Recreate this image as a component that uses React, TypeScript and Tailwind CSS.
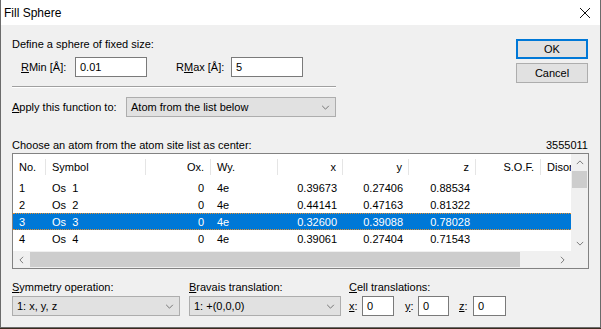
import React from 'react'

const font = { fontFamily: '"Liberation Sans", Arial, sans-serif' }

const rows = [
  { no: '1', sym: 'Os  1', ox: '0', wy: '4e', x: '0.39673', y: '0.27406', z: '0.88534' },
  { no: '2', sym: 'Os  2', ox: '0', wy: '4e', x: '0.44141', y: '0.47163', z: '0.81322' },
  { no: '3', sym: 'Os  3', ox: '0', wy: '4e', x: '0.32600', y: '0.39088', z: '0.78028' },
  { no: '4', sym: 'Os  4', ox: '0', wy: '4e', x: '0.39061', y: '0.27404', z: '0.71543' },
]

const Chevron = ({ dir = 'down', className = '' }: { dir?: 'down' | 'up' | 'left' | 'right'; className?: string }) => {
  const d = {
    down: 'M1 1 L5 5 L9 1',
    up: 'M1 5 L5 1 L9 5',
    left: 'M5 1 L1 5 L5 9',
    right: 'M1 1 L5 5 L1 9',
  }[dir]
  const vb = dir === 'down' || dir === 'up' ? '0 0 10 6' : '0 0 6 10'
  return (
    <svg viewBox={vb} className={className} fill="none" stroke="currentColor">
      <path d={d} />
    </svg>
  )
}

const Select = ({ value, className }: { value: string; className: string }) => (
  <div className={`flex h-[20px] items-center justify-between border border-[#adadad] bg-[#e1e1e1] pl-[4px] pr-[5px] ${className}`}>
    <span>{value}</span>
    <Chevron className="h-[5px] w-[9px] text-[#606060]" />
  </div>
)

const Input = ({ value, className }: { value: string; className: string }) => (
  <div className={`flex h-[20px] items-center border border-[#7a7a7a] bg-white pl-[4px] ${className}`}>{value}</div>
)

export default function App() {
  return (
    <div className="h-[329px] w-[601px] bg-[#3a2a1e]" style={font}>
      <div className="flex h-[328px] w-[601px] flex-col border-x border-b border-[#6b6b6b] bg-[#f0f0f0] text-[11px] leading-[16px] text-black">
        {/* Title bar */}
        <div className="flex h-[25px] shrink-0 items-center justify-between bg-white pl-[3px] pr-[10px] text-[12px]">
          <span>Fill Sphere</span>
          <svg viewBox="0 0 10 10" className="h-[10px] w-[10px]" stroke="#111" strokeWidth="1">
            <path d="M0 0 L10 10 M10 0 L0 10" />
          </svg>
        </div>

        <div className="flex flex-col px-[11px]">
          {/* Top area */}
          <div className="flex justify-between">
            <div className="flex w-[324px] flex-col">
              <div className="mt-[11px]">Define a sphere of fixed size:</div>
              <div className="mt-[5px] flex items-center">
                <span className="ml-[9px] w-[54px]">
                  <u>R</u>Min [Å]:
                </span>
                <Input value="0.01" className="w-[72px]" />
                <span className="ml-[29px] w-[55px]">
                  R<u>M</u>ax [Å]:
                </span>
                <Input value="5" className="w-[72px]" />
              </div>
              <div className="mt-[9px] border-t border-b border-t-[#a0a0a0] border-b-white" />
              <div className="mt-[9px] flex items-center">
                <span className="w-[114px] whitespace-nowrap">
                  <u>A</u>pply this function to:
                </span>
                <Select value="Atom from the list below" className="w-[210px]" />
              </div>
            </div>
            <div className="mt-[14px] mr-[1px] flex flex-col gap-[4px]">
              <button className="flex h-[20px] w-[72px] items-center justify-center border-2 border-[#0078d7] bg-[#e1e1e1]">OK</button>
              <button className="flex h-[20px] w-[72px] items-center justify-center border border-[#adadad] bg-[#e1e1e1]">Cancel</button>
            </div>
          </div>

          {/* List */}
          <div className="mt-[20px] flex justify-between pr-[1px]">
            <span>Choose an atom from the atom site list as center:</span>
            <span>3555011</span>
          </div>
          <div className="flex h-[116px] w-[577px] border border-[#828282] bg-white">
            <div className="flex w-[558px] flex-col">
              <div className="flex h-[98px] flex-col overflow-hidden">
                <div className="flex h-[25px] shrink-0 items-center whitespace-nowrap">
                  <div className="w-[33px] border-r border-[#e5e5e5] pl-[6px]">No.</div>
                  <div className="w-[100px] border-r border-[#e5e5e5] pl-[6px]">Symbol</div>
                  <div className="w-[65px] border-r border-[#e5e5e5] pr-[6px] text-right">Ox.</div>
                  <div className="w-[67px] border-r border-[#e5e5e5] pl-[6px]">Wy.</div>
                  <div className="w-[65px] border-r border-[#e5e5e5] pr-[6px] text-right">x</div>
                  <div className="w-[66px] border-r border-[#e5e5e5] pr-[6px] text-right">y</div>
                  <div className="w-[67px] border-r border-[#e5e5e5] pr-[6px] text-right">z</div>
                  <div className="w-[65px] border-r border-[#e5e5e5] pr-[6px] text-right">S.O.F.</div>
                  <div className="flex-1 overflow-hidden pl-[6px]">Disor</div>
                </div>
                {rows.map((r) => {
                  const sel = r.no === '3'
                  return (
                    <div
                      key={r.no}
                      className={`flex h-[17px] shrink-0 items-center whitespace-pre ${
                        sel ? 'border-y border-dotted border-[#e8902e] bg-[#0078d7] text-white' : ''
                      }`}
                    >
                      <div className="w-[33px] pl-[6px]">{r.no}</div>
                      <div className="w-[100px] pl-[6px]">{r.sym}</div>
                      <div className="w-[65px] pr-[7px] text-right">{r.ox}</div>
                      <div className="w-[67px] pl-[6px]">{r.wy}</div>
                      <div className="w-[65px] pr-[6px] text-right">{r.x}</div>
                      <div className="w-[66px] pr-[6px] text-right">{r.y}</div>
                      <div className="w-[67px] pr-[6px] text-right">{r.z}</div>
                    </div>
                  )
                })}
              </div>
              {/* Horizontal scrollbar */}
              <div className="flex h-[17px] items-center bg-[#f0f0f0]">
                <div className="flex w-[17px] justify-center">
                  <Chevron dir="left" className="h-[8px] w-[5px] text-[#606060]" />
                </div>
                <div className="h-[15px] w-[490px] bg-[#cdcdcd]" />
                <div className="flex-1" />
                <div className="flex w-[17px] justify-center">
                  <Chevron dir="right" className="h-[8px] w-[5px] text-[#606060]" />
                </div>
              </div>
            </div>
            {/* Vertical scrollbar */}
            <div className="flex w-[17px] flex-col bg-[#f0f0f0]">
              <div className="flex h-[17px] items-center justify-center">
                <Chevron dir="up" className="h-[5px] w-[8px] text-[#606060]" />
              </div>
              <div className="mx-[1px] h-[17px] bg-[#cdcdcd]" />
              <div className="h-[47px]" />
              <div className="flex h-[17px] items-center justify-center">
                <Chevron dir="down" className="h-[5px] w-[8px] text-[#606060]" />
              </div>
            </div>
          </div>

          {/* Bottom area */}
          <div className="mt-[10px] flex">
            <div className="flex w-[168px] flex-col gap-[1px]">
              <span>
                <u>S</u>ymmetry operation:
              </span>
              <Select value="1: x, y, z" className="w-[168px]" />
            </div>
            <div className="ml-[9px] flex w-[152px] flex-col gap-[1px]">
              <span>
                <u>B</u>ravais translation:
              </span>
              <Select value="1: +(0,0,0)" className="w-[152px]" />
            </div>
            <div className="ml-[8px] flex flex-col gap-[1px]">
              <span>
                <u>C</u>ell translations:
              </span>
              <div className="flex items-center">
                <span className="w-[13px]">
                  <u>x</u>:
                </span>
                <Input value="0" className="w-[32px]" />
                <span className="ml-[11px] w-[13px]">
                  <u>y</u>:
                </span>
                <Input value="0" className="w-[31px]" />
                <span className="ml-[10px] w-[14px]">
                  <u>z</u>:
                </span>
                <Input value="0" className="w-[33px]" />
              </div>
            </div>
          </div>
        </div>
      </div>
    </div>
  )
}
